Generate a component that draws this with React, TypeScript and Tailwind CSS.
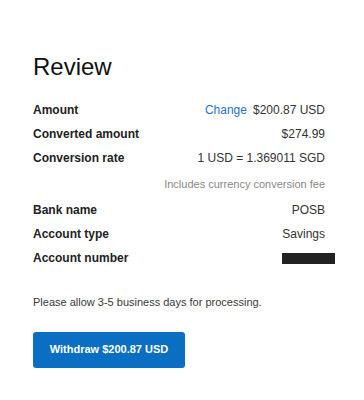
import React from "react";

const rows: { label: string; value: React.ReactNode }[] = [
  {
    label: "Amount",
    value: (
      <span>
        <a className="text-[#1f74cc] mr-[6px]">Change</a>$200.87 USD
      </span>
    ),
  },
  { label: "Converted amount", value: "$274.99" },
  { label: "Conversion rate", value: "1 USD = 1.369011 SGD" },
];

const bankRows: { label: string; value: React.ReactNode }[] = [
  { label: "Bank name", value: "POSB" },
  { label: "Account type", value: "Savings" },
  {
    label: "Account number",
    value: <span className="block w-[53px] h-[11px] bg-[#222] mr-[-10px]" />,
  },
];

const Row = ({ label, value }: { label: string; value: React.ReactNode }) => (
  <div className="flex items-center justify-between h-[24px]">
    <span className="font-bold text-[#222]">{label}</span>
    <span className="text-[#333]">{value}</span>
  </div>
);

const App = () => {
  return (
    <div className="w-[364px] h-[400px] bg-white font-['Liberation_Sans',Arial,sans-serif] text-[12px]">
      <div className="pl-[33px] pr-[39px] pt-[52px]">
        <h1 className="text-[24px] leading-[30px] text-[#111]">Review</h1>
        <div className="mt-[16px]">
          {rows.map((r) => (
            <Row key={r.label} label={r.label} value={r.value} />
          ))}
          <div className="h-[28px] flex items-center justify-end text-[11px] text-[#888]">
            Includes currency conversion fee
          </div>
          {bankRows.map((r) => (
            <Row key={r.label} label={r.label} value={r.value} />
          ))}
        </div>
        <p className="mt-[24px] text-[11px] text-[#3a3a3a]">
          Please allow 3-5 business days for processing.
        </p>
        <button className="mt-[21px] w-[152px] h-[36px] rounded-[3px] bg-[#0a6fc2] text-white font-bold text-[11px]">
          Withdraw $200.87 USD
        </button>
      </div>
    </div>
  );
};

export default App;
